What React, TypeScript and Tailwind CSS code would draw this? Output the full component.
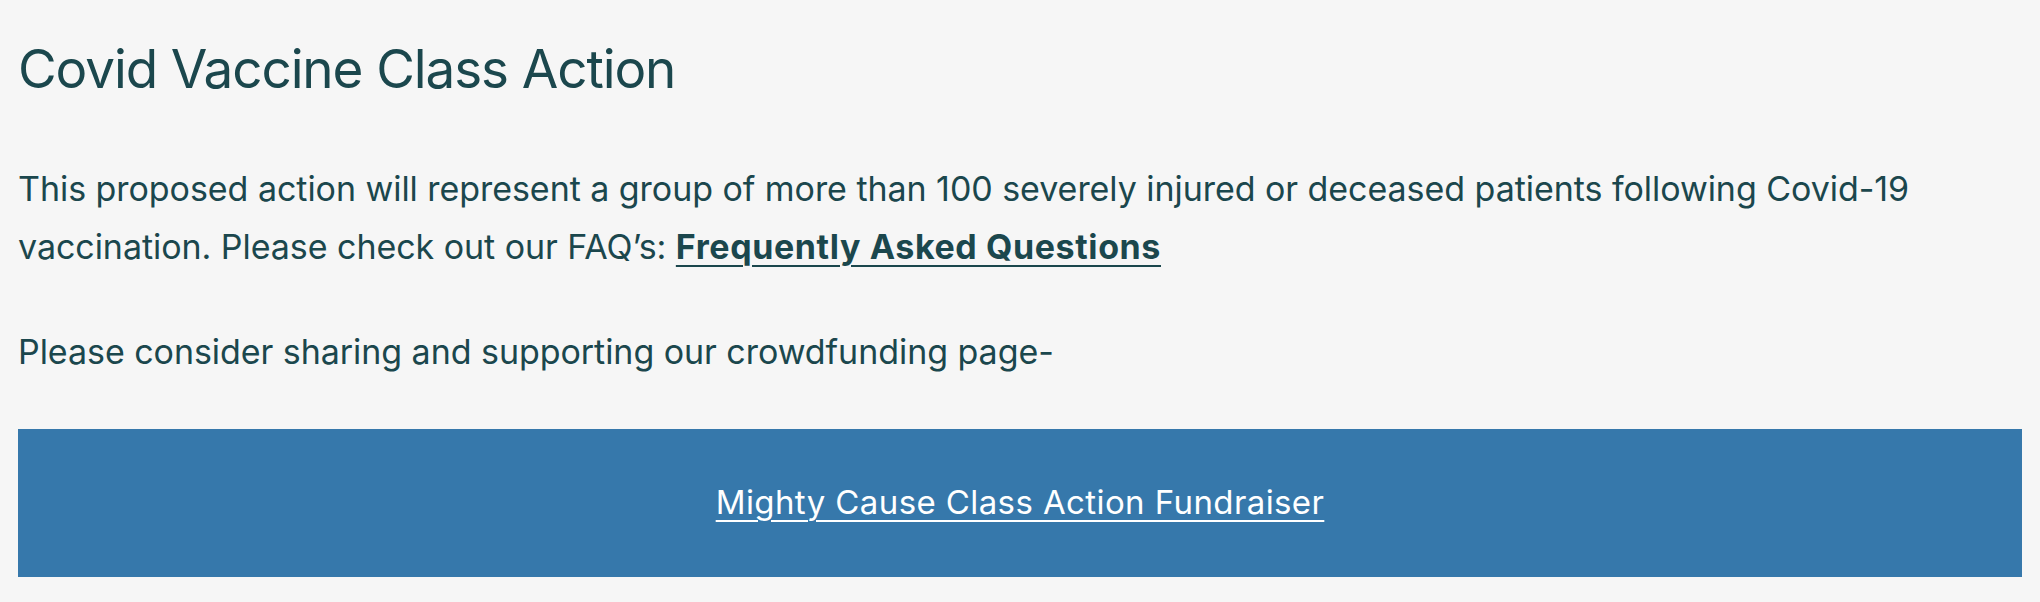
import React from 'react';

const App = () => {
  return (
    <div className="min-h-screen bg-[#f6f6f6] px-[18px] pt-[37px] text-[#1b474d] font-['Inter',sans-serif]">
      <h1 className="text-[53px] leading-[64px] font-normal tracking-[-1.1px]">Covid Vaccine Class Action</h1>
      <p className="mt-[59px] text-[34px] leading-[58px] tracking-[-0.05px]">
        This proposed action will represent a group of more than 100 severely injured or deceased patients following Covid-19
        vaccination. Please check out our FAQ’s:{' '}
        <a href="#" className="font-bold tracking-[0.6px] underline underline-offset-[6px] decoration-2">
          Frequently Asked Questions
        </a>
      </p>
      <p className="mt-[47px] text-[34px] leading-[58px] tracking-[-0.05px]">
        Please consider sharing and supporting our crowdfunding page-
      </p>
      <div className="mt-[48px] flex h-[148px] items-center justify-center bg-[#3678ab]">
        <a href="#" className="text-[33px] tracking-[0.4px] text-white underline underline-offset-[6px] decoration-2">
          Mighty Cause Class Action Fundraiser
        </a>
      </div>
    </div>
  );
};

export default App;
